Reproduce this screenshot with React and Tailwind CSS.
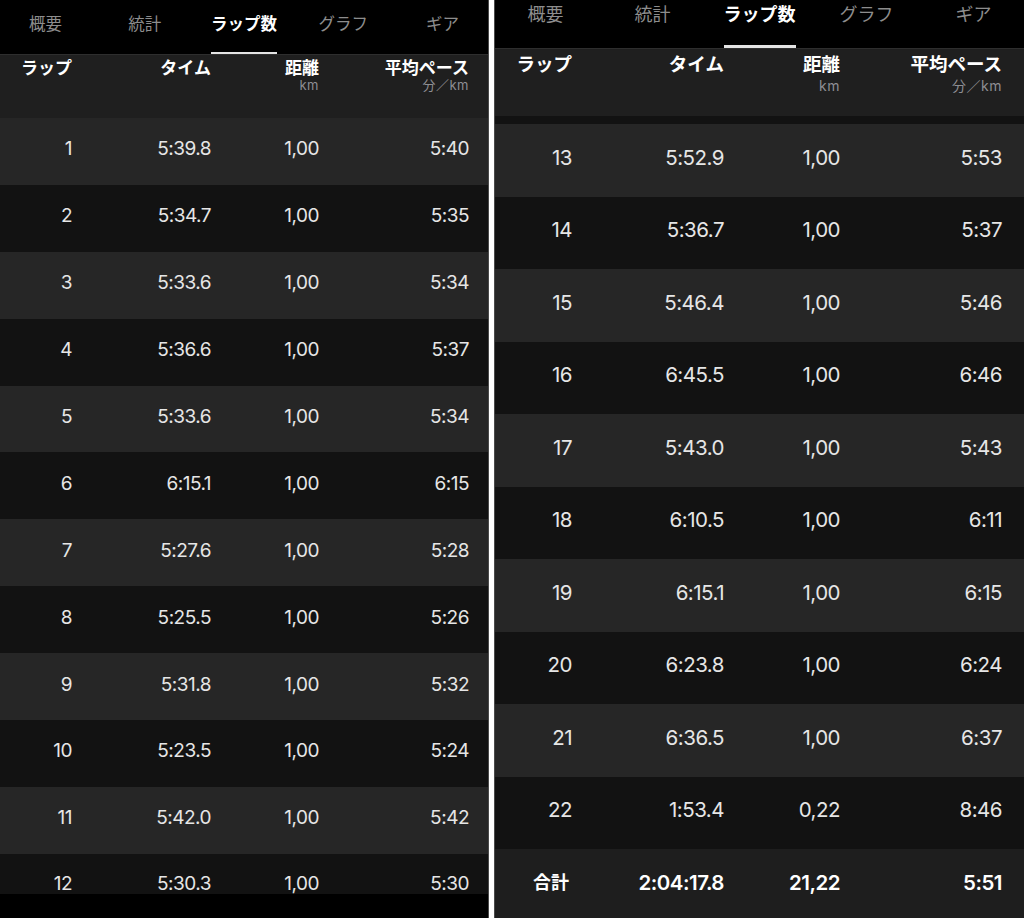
import React from 'react';

const tabs = ['概要', '統計', 'ラップ数', 'グラフ', 'ギア'];

const leftLaps = [
  ['1', '5:39.8', '1,00', '5:40'],
  ['2', '5:34.7', '1,00', '5:35'],
  ['3', '5:33.6', '1,00', '5:34'],
  ['4', '5:36.6', '1,00', '5:37'],
  ['5', '5:33.6', '1,00', '5:34'],
  ['6', '6:15.1', '1,00', '6:15'],
  ['7', '5:27.6', '1,00', '5:28'],
  ['8', '5:25.5', '1,00', '5:26'],
  ['9', '5:31.8', '1,00', '5:32'],
  ['10', '5:23.5', '1,00', '5:24'],
  ['11', '5:42.0', '1,00', '5:42'],
];

const rightLaps = [
  ['13', '5:52.9', '1,00', '5:53'],
  ['14', '5:36.7', '1,00', '5:37'],
  ['15', '5:46.4', '1,00', '5:46'],
  ['16', '6:45.5', '1,00', '6:46'],
  ['17', '5:43.0', '1,00', '5:43'],
  ['18', '6:10.5', '1,00', '6:11'],
  ['19', '6:15.1', '1,00', '6:15'],
  ['20', '6:23.8', '1,00', '6:24'],
  ['21', '6:36.5', '1,00', '6:37'],
  ['22', '1:53.4', '0,22', '8:46'],
];

// full class strings for each of the two screenshots (right one is ~1.084x larger)
const LEFT = {
  panel: 'w-[489px] border-r border-[#4a4a4a]',
  tabBar: 'h-[54px] mx-[-4px]',
  tabText: 'text-[16.5px] leading-[20px] pt-[14px]',
  underline: 'h-[2.5px]',
  header: 'h-[64px] pt-[3px]',
  label: 'text-[17px] leading-[20px]',
  sub: 'text-[13px] leading-[14px] tracking-[0.5px]',
  grid: 'grid grid-cols-[72px_139px_108px_150px]',
  row: 'h-[66.9px] pb-[5px] text-[19px]',
};

const RIGHT = {
  panel: 'w-[530px] border-l border-[#4a4a4a]',
  tabBar: 'h-[48px] mx-[-3px]',
  tabText: 'text-[18px] leading-[22px] pt-[4px]',
  underline: 'h-[3px]',
  header: 'h-[68px] pt-[3.5px]',
  label: 'text-[18.5px] leading-[22px]',
  sub: 'text-[14px] leading-[15px] mt-[3px] tracking-[0.5px]',
  grid: 'grid grid-cols-[77px_152px_116px_162px]',
  row: 'h-[72.5px] pb-[5px] text-[20.5px]',
};

const TabBar = ({ s }) => (
  <div className={`flex shrink-0 bg-black ${s.tabBar}`}>
    {tabs.map((t) => {
      const active = t === 'ラップ数';
      return (
        <div key={t} className="flex-1 flex justify-center h-full">
          <div className="inline-flex flex-col h-full">
            <span
              className={`${s.tabText} whitespace-nowrap ${
                active ? 'text-white font-bold' : 'text-[#8d8d8d]'
              }`}
            >
              {t}
            </span>
            {active && <div className={`mt-auto w-full bg-[#e4e4e4] ${s.underline}`} />}
          </div>
        </div>
      );
    })}
  </div>
);

const Header = ({ s }) => (
  <div className={`${s.grid} shrink-0 bg-[#1f1f1f] border-t border-[#2e2e2e] ${s.header}`}>
    <div className={`text-right font-bold text-white ${s.label}`}>ラップ</div>
    <div className={`text-right font-bold text-white ${s.label}`}>タイム</div>
    <div className="flex flex-col items-end">
      <span className={`font-bold text-white ${s.label}`}>距離</span>
      <span className={`text-[#8e8e93] ${s.sub}`}>km</span>
    </div>
    <div className="flex flex-col items-end">
      <span className={`font-bold text-white whitespace-nowrap ${s.label}`}>平均ペース</span>
      <span className={`text-[#8e8e93] whitespace-nowrap ${s.sub}`}>分／km</span>
    </div>
  </div>
);

const Row = ({ s, lap, bg, bold, rowCls, firstCls = '' }) => (
  <div
    className={`${s.grid} shrink-0 items-center leading-none tracking-[-0.5px] ${rowCls || s.row} ${bg} ${
      bold ? 'font-semibold text-white' : 'text-[#e6e6e6]'
    }`}
  >
    {lap.map((v, i) => (
      <div key={i} className={`text-right whitespace-nowrap ${i === 0 ? firstCls : ''}`}>
        {v}
      </div>
    ))}
  </div>
);

const rowBg = (lap) => (Number(lap) % 2 === 1 ? 'bg-[#262626]' : 'bg-[#121212]');

export default function App() {
  return (
    <div className="flex gap-[5px] w-[1024px] h-[918px] bg-white overflow-hidden font-['Inter','Noto_Sans_CJK_JP',sans-serif]">
      <div className={`flex flex-col h-full bg-black overflow-hidden ${LEFT.panel}`}>
        <TabBar s={LEFT} />
        <Header s={LEFT} />
        {leftLaps.map((lap) => (
          <Row key={lap[0]} s={LEFT} lap={lap} bg={rowBg(lap[0])} />
        ))}
        <Row
          s={LEFT}
          lap={['12', '5:30.3', '1,00', '5:30']}
          bg="bg-[#121212]"
          rowCls="h-[40px] pt-[20px] text-[19px]"
        />
        <div className="flex-1 bg-black" />
      </div>

      <div className={`flex flex-col h-full bg-black overflow-hidden ${RIGHT.panel}`}>
        <TabBar s={RIGHT} />
        <Header s={RIGHT} />
        <div className="h-[8px] shrink-0 bg-[#121212]" />
        {rightLaps.map((lap) => (
          <Row key={lap[0]} s={RIGHT} lap={lap} bg={rowBg(lap[0])} />
        ))}
        <div className="flex-1 overflow-hidden bg-[#1e1e1e]">
          <Row
            s={RIGHT}
            lap={['合計', '2:04:17.8', '21,22', '5:51']}
            bg="bg-[#1e1e1e]"
            bold
            firstCls="text-[18px] pr-[3px] tracking-normal"
          />
        </div>
      </div>
    </div>
  );
}
